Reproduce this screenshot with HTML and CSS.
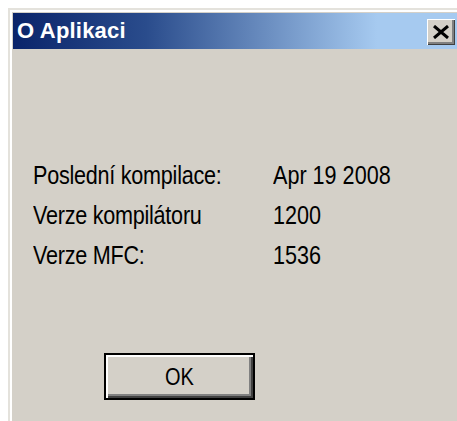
FILE: index.html
```html
<!DOCTYPE html>
<html lang="cs">
<head>
<meta charset="utf-8">
<title>O Aplikaci</title>
<link rel="stylesheet" href="styles.css">
</head>
<body>
  <div class="window">
    <div class="frame">
      <div class="titlebar">
        <span class="title">O Aplikaci</span>
        <button class="close" type="button" aria-label="Zavřít">
          <svg width="18" height="14" viewBox="0 0 18 14">
            <path d="M2 1 L16 13 M16 1 L2 13" stroke="#000" stroke-width="3" fill="none"/>
          </svg>
        </button>
      </div>
      <div class="client">
        <div class="info">
          <div class="cell label">Poslední kompilace:</div>
          <div class="cell">Apr 19 2008</div>
          <div class="cell label">Verze kompilátoru</div>
          <div class="cell">1200</div>
          <div class="cell label">Verze MFC:</div>
          <div class="cell">1536</div>
        </div>
        <button class="ok" type="button"><span class="ok-label">OK</span></button>
      </div>
    </div>
  </div>
</body>
</html>
```

FILE: styles.css
```css
html, body {
  margin: 0;
  padding: 0;
  background: #ffffff;
  overflow: hidden;
  height: 421px;
}

body {
  box-sizing: border-box;
  padding: 8px 0 0 8px;
  font-family: "Liberation Sans", Arial, sans-serif;
  color: #000;
}

/* classic 3D window edge: light grey outer, white inner */
.window {
  width: 449px;
  height: 413px;
  box-sizing: border-box;
  background: #d4d0c8;
  border-top: 2px solid #e4e2dc;
  border-left: 2px solid #e4e2dc;
  overflow: hidden;
}

.frame {
  height: 100%;
  box-sizing: border-box;
  border-top: 2px solid #ffffff;
  border-left: 2px solid #ffffff;
  padding: 1px 0 0 1px;
}

.titlebar {
  height: 36px;
  display: flex;
  justify-content: space-between;
  align-items: flex-start;
  background: linear-gradient(to right, #0a246a 0%, #2a4c8c 30%, #a6caf0 82%, #a6caf0 100%);
}

.title {
  color: #ffffff;
  font-weight: bold;
  font-size: 22px;
  line-height: 36px;
  padding-left: 4px;
  letter-spacing: 0.2px;
}

.close {
  margin: 6px 2px 0 0;
  width: 28px;
  height: 26px;
  padding: 0;
  display: flex;
  align-items: center;
  justify-content: center;
  background: #d4d0c8;
  border: none;
  box-shadow:
    inset 1px 1px #ffffff,
    inset -1px -1px #404040,
    inset -3px -3px #808080;
}

.close svg {
  display: block;
  margin: -1px 0 0 -1px;
}

.client {
  display: flex;
  flex-direction: column;
  align-items: flex-start;
  padding: 108px 0 0 20px;
}

.info {
  display: grid;
  grid-template-columns: 240px auto;
  grid-auto-rows: 40px;
}

.cell {
  font-size: 21.6px;
  line-height: 40px;
  white-space: nowrap;
  transform: scaleY(1.18);
  transform-origin: 0 27.6px;
}

.label {
  letter-spacing: -0.25px;
}

/* default push button: black frame plus raised bevel */
.ok {
  margin: 76px 0 0 71px;
  width: 151px;
  height: 47px;
  padding: 0;
  background: #d4d0c8;
  border: 2px solid #000;
  box-shadow:
    inset 2px 2px #ffffff,
    inset -2px -2px #404040,
    inset -4px -4px #808080;
  font-family: "Liberation Sans", Arial, sans-serif;
  color: #000;
}

.ok-label {
  display: inline-block;
  font-size: 20px;
  transform: scaleY(1.2);
  margin-top: 2px;
}
```
